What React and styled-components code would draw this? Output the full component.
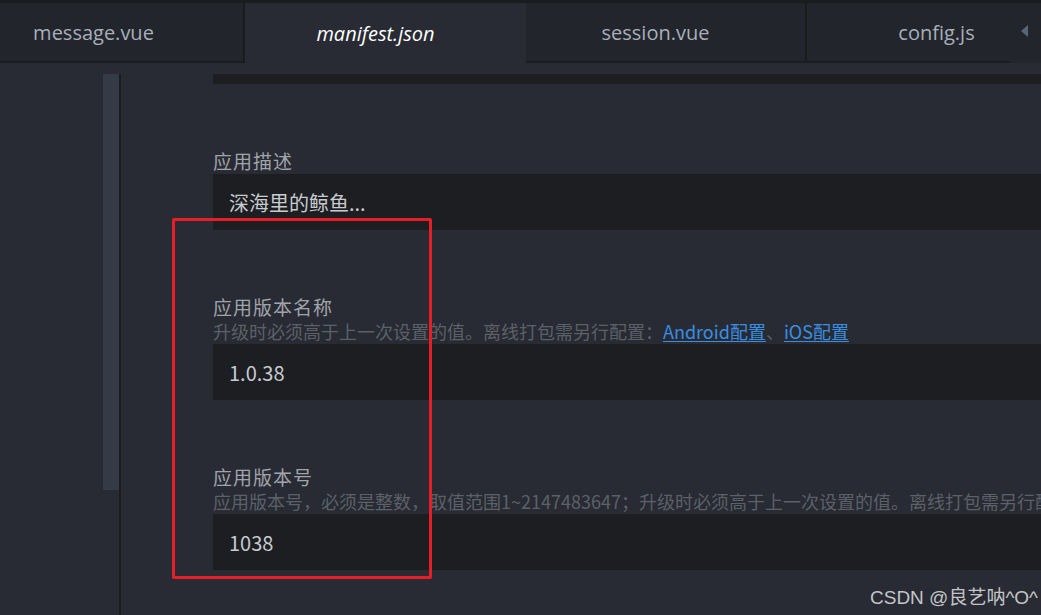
import React from 'react';
import styled, { createGlobalStyle } from 'styled-components';

const GlobalStyle = createGlobalStyle`
  html, body {
    margin: 0;
    padding: 0;
    background: #282b33;
  }
  * { box-sizing: border-box; }
`;

const tabs = [
  { name: 'message.vue' },
  { name: 'manifest.json', active: true },
  { name: 'session.vue' },
  { name: 'config.js' },
];

const fields = [
  { label: '应用描述', value: '深海里的鲸鱼...' },
  {
    label: '应用版本名称',
    desc: '升级时必须高于上一次设置的值。离线打包需另行配置：',
    links: true,
    value: '1.0.38',
  },
  {
    label: '应用版本号',
    desc: '应用版本号，必须是整数，取值范围1~2147483647；升级时必须高于上一次设置的值。离线打包需另行配置：Android配置、iOS配置',
    value: '1038',
  },
];

const App = () => {
  return (
    <Screen>
      <GlobalStyle />
      <TopStrip />
      <TabBar>
        <TabScroller>
          <TabRow>
            {tabs.map((t) => (
              <Tab key={t.name} $active={t.active}>
                {t.name}
              </Tab>
            ))}
          </TabRow>
        </TabScroller>
        <ArrowBox>
          <svg width="8" height="12" viewBox="0 0 8 12">
            <polygon points="7,0 7,12 0,6" fill="#5d6573" />
          </svg>
        </ArrowBox>
      </TabBar>
      <Body>
        <Sidebar>
          <ScrollThumb />
        </Sidebar>
        <Divider />
        <Content>
          <TopInputEdge />
          {fields.map((f) => (
            <Field key={f.label}>
              <Label>{f.label}</Label>
              {f.desc && (
                <Desc>
                  {f.desc}
                  {f.links && (
                    <>
                      <DocLink>Android配置</DocLink>、<DocLink>iOS配置</DocLink>
                    </>
                  )}
                </Desc>
              )}
              <Input>{f.value}</Input>
            </Field>
          ))}
        </Content>
      </Body>
      <Highlight />
      <Watermark>CSDN @良艺呐^O^</Watermark>
    </Screen>
  );
};

export default App;

const Screen = styled.div`
  position: relative;
  width: 1041px;
  height: 615px;
  overflow: hidden;
  background: #282b33;
  font-family: "Noto Sans CJK SC", "Open Sans", sans-serif;
`;

const TopStrip = styled.div`
  height: 3px;
  background: #1b1c20;
`;

const TabBar = styled.div`
  display: flex;
  height: 60px;
  background: #22252c;
`;

const TabScroller = styled.div`
  flex: 0 0 1010px;
  overflow: hidden;
`;

const TabRow = styled.div`
  display: flex;
  margin-left: -36px;
  height: 100%;
`;

const Tab = styled.div`
  flex: 0 0 281px;
  display: flex;
  align-items: center;
  justify-content: center;
  padding-right: 20px;
  height: 100%;
  font-family: "Open Sans", "Noto Sans", sans-serif;
  font-size: 20px;
  font-style: ${(p) => (p.$active ? 'italic' : 'normal')};
  color: ${(p) => (p.$active ? '#ffffff' : '#a8afb9')};
  background: ${(p) => (p.$active ? '#282b33' : '#22252c')};
  border-right: ${(p) => (p.$active ? 'none' : '2px solid #1b1c20')};
  border-bottom: ${(p) => (p.$active ? 'none' : '2px solid #1b1c20')};
`;

const ArrowBox = styled.div`
  flex: 1;
  display: flex;
  align-items: center;
  padding-left: 11px;
  padding-bottom: 4px;
`;

const Body = styled.div`
  display: flex;
  padding-top: 11px;
  height: 552px;
`;

const Sidebar = styled.div`
  flex: 0 0 119px;
  padding-left: 103px;
`;

const ScrollThumb = styled.div`
  width: 16px;
  height: 416px;
  background: #343a46;
`;

const Divider = styled.div`
  flex: 0 0 2px;
  background: #1b1c20;
`;

const Content = styled.div`
  flex: 0 0 920px;
  padding-left: 92px;
  display: flex;
  flex-direction: column;
`;

const TopInputEdge = styled.div`
  height: 10px;
  background: #1d1e22;
`;

const Field = styled.div`
  margin-top: 64px;
  display: flex;
  flex-direction: column;
`;

const Label = styled.div`
  height: 26px;
  line-height: 26px;
  font-size: 19px;
  letter-spacing: 1px;
  color: #a0a4ab;
  white-space: nowrap;
`;

const Desc = styled.div`
  height: 24px;
  line-height: 22px;
  font-size: 18px;
  color: #5c6068;
  white-space: nowrap;
`;

const DocLink = styled.span`
  color: #3a8ee0;
  text-decoration: underline;
  text-underline-offset: 2px;
  cursor: pointer;
`;

const Input = styled.div`
  height: 56px;
  display: flex;
  align-items: center;
  padding-left: 16px;
  background: #1d1e22;
  font-size: 20px;
  color: #c7cbd0;
`;

const Highlight = styled.div`
  position: absolute;
  left: 172px;
  top: 218px;
  width: 260px;
  height: 361px;
  border: 3px solid #e81e27;
  border-radius: 2px;
  pointer-events: none;
`;

const Watermark = styled.div`
  position: absolute;
  right: 3px;
  bottom: 6px;
  font-family: "Liberation Sans", "Noto Sans CJK SC", sans-serif;
  font-size: 19px;
  color: #c3c5c8;
  white-space: nowrap;
`;
